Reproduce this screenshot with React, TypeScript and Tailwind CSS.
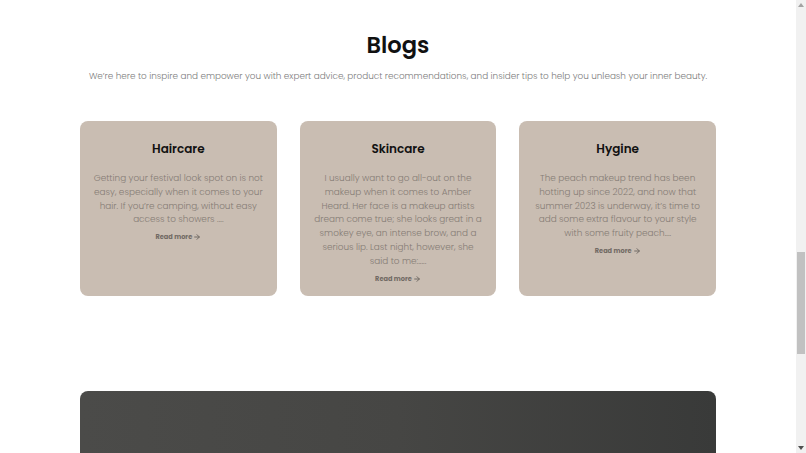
import React from "react";

type Post = { title: string; body: string };

const posts: Post[] = [
  {
    title: "Haircare",
    body: "Getting your festival look spot on is not easy, especially when it comes to your hair. If you’re camping, without easy access to showers ....",
  },
  {
    title: "Skincare",
    body: "I usually want to go all-out on the makeup when it comes to Amber Heard. Her face is a makeup artists dream come true; she looks great in a smokey eye, an intense brow, and a serious lip. Last night, however, she said to me:.....",
  },
  {
    title: "Hygine",
    body: "The peach makeup trend has been hotting up since 2022, and now that summer 2023 is underway, it’s time to add some extra flavour to your style with some fruity peach....",
  },
];

const font = { fontFamily: '"Poppins", "Open Sans", "Noto Sans", sans-serif' };

const BlogCard = ({ post }: { post: Post }) => {
  return (
    <div className="flex h-[175px] flex-col items-center rounded-[8px] bg-[#c9bdb2] px-[13px] pt-[18px] text-center">
      <h3 className="text-[12px] leading-[20px] font-semibold text-[#111]">
        {post.title}
      </h3>
      <p className="mt-[13px] text-[8.9px] leading-[13.8px] font-light text-[#857c75]">
        {post.body}
      </p>
      <a
        href="#"
        className="mt-[4px] flex items-center gap-[1px] text-[6.6px] leading-[12px] font-bold text-[#716a64]"
      >
        Read more
        <svg
          width="8"
          height="8"
          viewBox="0 0 24 24"
          fill="none"
          stroke="currentColor"
          strokeWidth="3"
          strokeLinecap="round"
          strokeLinejoin="round"
        >
          <path d="M5 12h14" />
          <path d="m12 5 7 7-7 7" />
        </svg>
      </a>
    </div>
  );
};

const Scrollbar = () => (
  <div className="flex h-full w-[10px] flex-col items-center bg-[#f1f1f1]">
    <div className="mt-[3px] h-0 w-0 border-x-[3px] border-b-[4px] border-x-transparent border-b-[#a3a3a3]" />
    <div className="mt-[245px] h-[102px] w-[8px] bg-[#c1c1c1]" />
    <div className="mt-auto mb-[3px] h-0 w-0 border-x-[3px] border-t-[4px] border-x-transparent border-t-[#505050]" />
  </div>
);

const App = () => {
  return (
    <div className="flex h-[453px] w-full overflow-hidden bg-white" style={font}>
      <main className="flex flex-1 flex-col items-center pt-[29px]">
        <h2 className="text-[22.6px] leading-[32px] font-semibold text-[#111]">
          Blogs
        </h2>
        <p className="mt-[7px] text-[8.85px] leading-[16px] font-light text-[#7d7d7d]">
          We’re here to inspire and empower you with expert advice, product
          recommendations, and insider tips to help you unleash your inner beauty.
        </p>
        <div className="mt-[37px] grid w-[636px] grid-cols-3 gap-[23px]">
          {posts.map((p) => (
            <BlogCard key={p.title} post={p} />
          ))}
        </div>
        <div className="mt-[95px] h-[80px] w-[636px] shrink-0 rounded-t-[8px] bg-gradient-to-r from-[#4b4b49] via-[#464644] to-[#393a39]" />
      </main>
      <Scrollbar />
    </div>
  );
};

export default App;
